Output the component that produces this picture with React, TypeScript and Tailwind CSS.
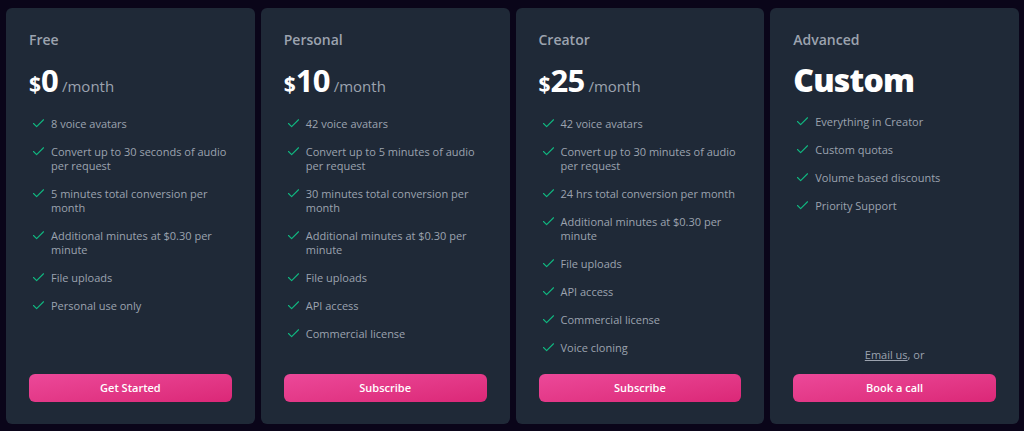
import { Check } from 'lucide-react';

interface Plan {
  name: string;
  price?: string;
  features: string[];
  cta: string;
}

const plans: Plan[] = [
  {
    name: 'Free',
    price: '0',
    features: [
      '8 voice avatars',
      'Convert up to 30 seconds of audio per request',
      '5 minutes total conversion per month',
      'Additional minutes at $0.30 per minute',
      'File uploads',
      'Personal use only',
    ],
    cta: 'Get Started',
  },
  {
    name: 'Personal',
    price: '10',
    features: [
      '42 voice avatars',
      'Convert up to 5 minutes of audio per request',
      '30 minutes total conversion per month',
      'Additional minutes at $0.30 per minute',
      'File uploads',
      'API access',
      'Commercial license',
    ],
    cta: 'Subscribe',
  },
  {
    name: 'Creator',
    price: '25',
    features: [
      '42 voice avatars',
      'Convert up to 30 minutes of audio per request',
      '24 hrs total conversion per month',
      'Additional minutes at $0.30 per minute',
      'File uploads',
      'API access',
      'Commercial license',
      'Voice cloning',
    ],
    cta: 'Subscribe',
  },
  {
    name: 'Advanced',
    features: ['Everything in Creator', 'Custom quotas', 'Volume based discounts', 'Priority Support'],
    cta: 'Book a call',
  },
];

function PlanCard({ plan }: { plan: Plan }) {
  return (
    <div className="flex-1 flex flex-col bg-[#1f2937] rounded-md px-[23px] pt-[22px] pb-[22px]">
      <h3 className="text-[14px] leading-5 font-semibold text-[#9ca3af]">{plan.name}</h3>

      {plan.price !== undefined ? (
        <div className="mt-[15px] flex items-baseline h-9">
          <span className="text-[21px] font-bold text-white leading-none">$</span>
          <span className="text-[31px] font-bold text-white leading-none tracking-tight">{plan.price}</span>
          <span className="ml-1 text-[15px] text-[#9ca3af] leading-none">/month</span>
        </div>
      ) : (
        <div className="mt-3 h-9 flex items-center">
          <span className="text-[32px] font-extrabold text-white leading-none tracking-tight">Custom</span>
        </div>
      )}

      <ul className={`flex flex-col gap-[14px] ${plan.price !== undefined ? 'mt-4' : 'mt-[17px]'}`}>
        {plan.features.map((f) => (
          <li key={f} className="flex items-start">
            <Check className="w-[15px] h-[15px] ml-[2px] -mt-px shrink-0 text-[#10b981]" strokeWidth={1.75} />
            <span className="ml-[5px] text-[11px] leading-[14px] text-[#9ca3af]">{f}</span>
          </li>
        ))}
      </ul>

      <div className="flex-1" />

      {plan.price === undefined && (
        <p className="mb-[12px] text-center text-[11px] leading-[14px] text-[#9ca3af]">
          <a className="underline">Email us</a>, or
        </p>
      )}

      <button className="h-7 w-full rounded-md bg-linear-to-br from-[#ec4899] to-[#db2777] text-white text-[11px] font-semibold">
        {plan.cta}
      </button>
    </div>
  );
}

export default function App() {
  return (
    <div
      className="w-[1024px] h-[431px] bg-[#0a0519] flex gap-[6px] pl-[6px] pr-[5px] pt-2 pb-[7px]"
      style={{ fontFamily: '"Open Sans", "Noto Sans", sans-serif' }}
    >
      {plans.map((p) => (
        <PlanCard key={p.name} plan={p} />
      ))}
    </div>
  );
}
